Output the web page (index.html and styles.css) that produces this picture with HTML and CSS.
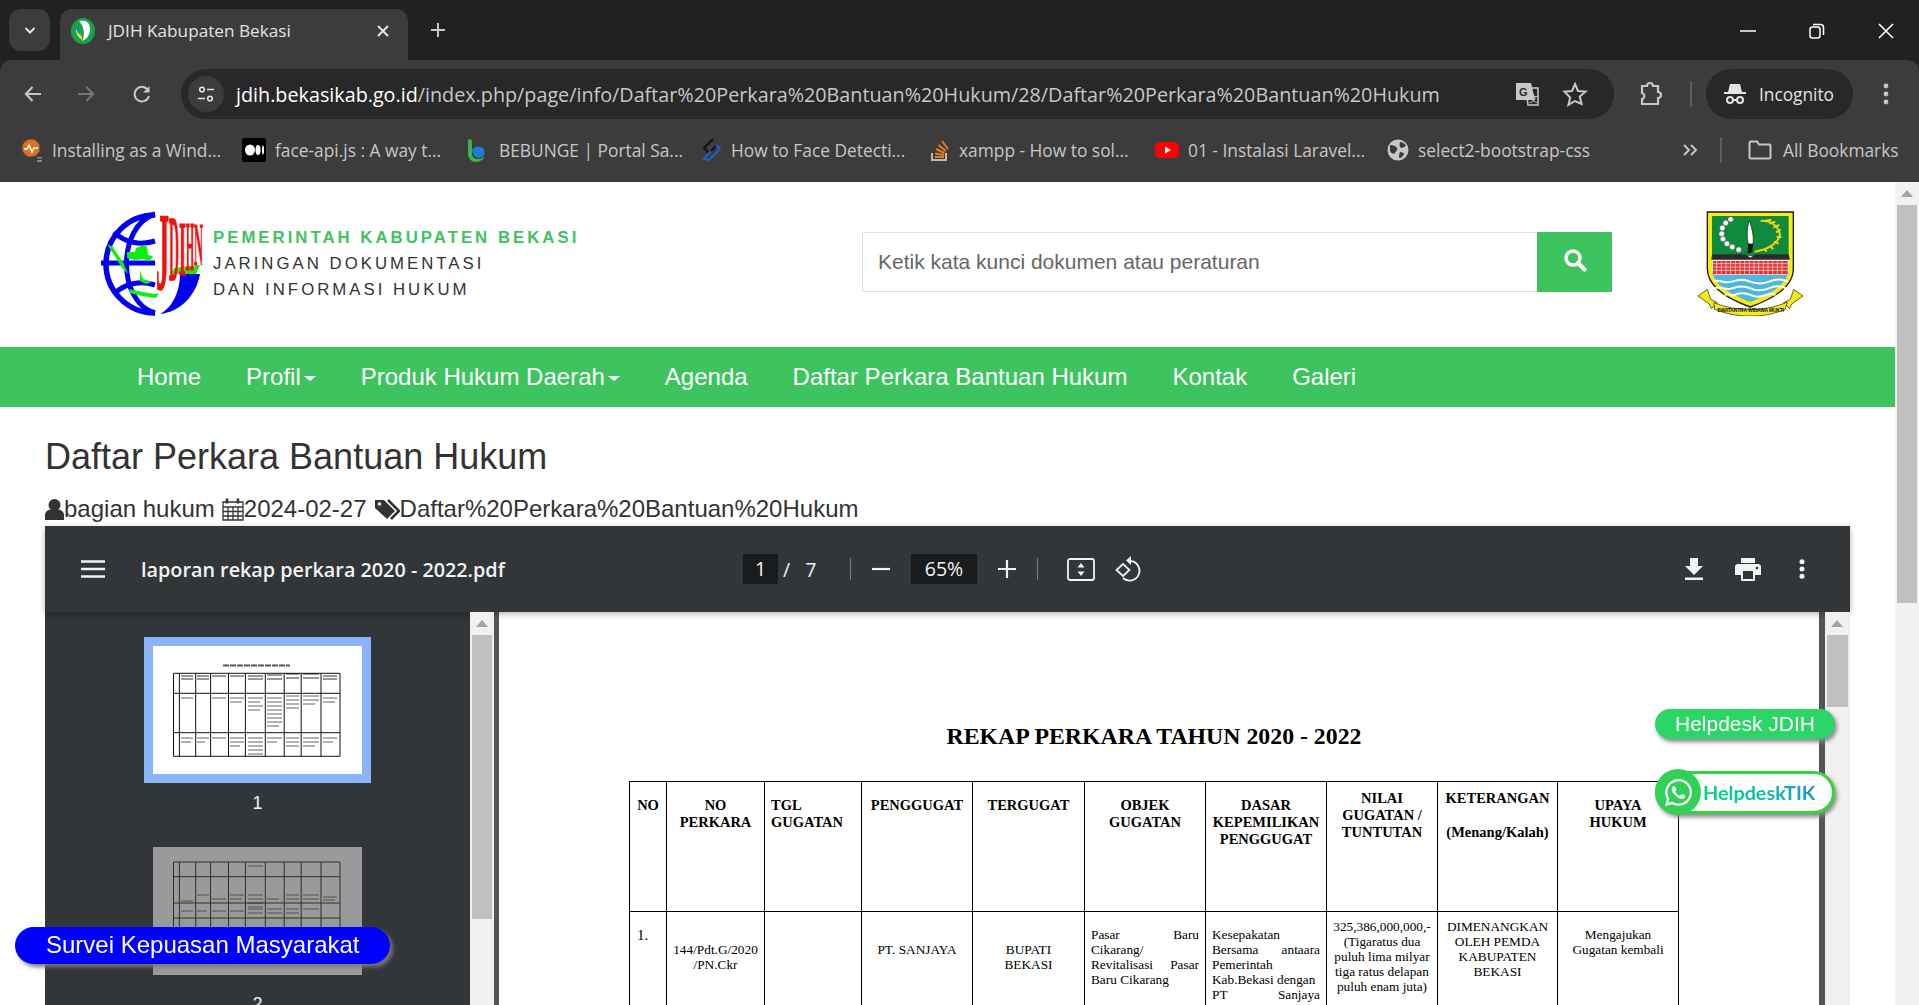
FILE: index.html
```html
<!DOCTYPE html>
<html lang="id">
<head>
<meta charset="UTF-8">
<title>JDIH Kabupaten Bekasi</title>
<link rel="stylesheet" href="styles.css">
</head>
<body>
  <!-- browser -->
  <div class="chrome">
    <div class="tabstrip">
      <div class="tab-list"><svg width="14" height="14" viewBox="0 0 14 14"><path d="M2.500 5l4.500 4.500L11.500 5" fill="none" stroke="#e3e3e3" stroke-width="2"/></svg></div>
      <div class="tab">
        <svg class="favicon" width="24" height="26" viewBox="0 0 24 26"><ellipse cx="12" cy="13" rx="12" ry="13" fill="#16a34a"/><path d="M8 3c7-1 11 1 11 8 0 6-3 10-8 12 3-5 3-14-3-20z" fill="#fff"/><path d="M5 10c4 2 6 6 6 12-3-2-7-7-6-12z" fill="#f4e61c"/><path d="M5 9c3 1 5 5 5 9-2-2-5-5-5-9z" fill="#1d7fd0"/></svg>
        <span class="tab-title">JDIH Kabupaten Bekasi</span>
        <svg class="tab-close" width="14" height="14" viewBox="0 0 14 14"><path d="M2 2l10 10M12 2L2 12" stroke="#e3e3e3" stroke-width="2"/></svg>
      </div>
      <svg class="new-tab" width="18" height="18" viewBox="0 0 18 18"><path d="M9 2v14M2 9h14" stroke="#c7c7c7" stroke-width="2"/></svg>
      <div class="win-controls">
        <svg width="16" height="16" viewBox="0 0 16 16"><path d="M0 8h16" stroke="#fff" stroke-width="1.500"/></svg>
        <svg width="16" height="16" viewBox="0 0 16 16"><rect x="1" y="4" width="10" height="11" rx="2.500" fill="none" stroke="#fff" stroke-width="1.500"/><path d="M4 1.500h7.500a3 3 0 013 3V12" fill="none" stroke="#fff" stroke-width="1.500"/></svg>
        <svg width="16" height="16" viewBox="0 0 16 16"><path d="M1 1l14 14M15 1L1 15" stroke="#fff" stroke-width="1.600"/></svg>
      </div>
    </div>
    <div class="toolbar">
      <svg class="nav-btn" width="20" height="20" viewBox="0 0 20 20"><path d="M18 10H3M9.500 3L2.800 10l6.700 7" fill="none" stroke="#c7c7c7" stroke-width="2"/></svg>
      <svg class="nav-btn" width="20" height="20" viewBox="0 0 20 20"><path d="M2 10h15M10.500 3l6.700 7-6.700 7" fill="none" stroke="#777" stroke-width="2"/></svg>
      <svg class="nav-btn" width="20" height="20" viewBox="0 0 20 20"><path d="M16.500 7A7.300 7.300 0 1017 12" fill="none" stroke="#c7c7c7" stroke-width="2"/><path d="M17.500 2v6.500H11z" fill="#c7c7c7"/></svg>
      <div class="omnibox">
        <span class="site-chip"><svg width="20" height="20" viewBox="0 0 20 20"><circle cx="6" cy="5.500" r="2.300" fill="none" stroke="#e3e3e3" stroke-width="1.600"/><path d="M11 5.500h7M2 14.500h7" stroke="#e3e3e3" stroke-width="1.600"/><circle cx="14" cy="14.500" r="2.300" fill="none" stroke="#e3e3e3" stroke-width="1.600"/></svg></span>
        <span class="url"><b>jdih.bekasikab.go.id</b>/index.php/page/info/Daftar%20Perkara%20Bantuan%20Hukum/28/Daftar%20Perkara%20Bantuan%20Hukum</span>
        <svg class="translate" width="26" height="26" viewBox="0 0 26 26"><path d="M12 7h12v17H14z" fill="#282828" stroke="#c7c7c7" stroke-width="1.500"/><path d="M2 2h15l4 17H2z" fill="#c7c7c7"/><text x="5" y="14.500" class="translate-g">G</text><text x="15" y="21" class="translate-x">文</text></svg>
        <svg class="star" width="26" height="26" viewBox="0 0 26 26"><path d="M13 3l3 7 7.500.6-5.700 4.900 1.800 7.400L13 20l-6.600 3.900 1.800-7.400L2.500 10.600 10 10z" fill="none" stroke="#c7c7c7" stroke-width="2"/></svg>
      </div>
      <svg class="puzzle" width="24" height="26" viewBox="0 0 24 26"><path d="M3 5h5c0-4 6-4 6 0h5v6c4 0 4 6 0 6v6H3v-5c3-1 3-5 0-6z" fill="none" stroke="#c7c7c7" stroke-width="2.200"/></svg>
      <span class="tool-sep"></span>
      <div class="incognito">
        <svg width="24" height="24" viewBox="0 0 24 24"><path d="M7 2h10l2 8H5z" fill="#e3e3e3"/><path d="M1 11h22" stroke="#e3e3e3" stroke-width="2"/><circle cx="7" cy="18" r="3" fill="none" stroke="#e3e3e3" stroke-width="2"/><circle cx="17" cy="18" r="3" fill="none" stroke="#e3e3e3" stroke-width="2"/><path d="M10 18h4" stroke="#e3e3e3" stroke-width="2"/></svg>
        <span>Incognito</span>
      </div>
      <svg class="kebab" width="6" height="24" viewBox="0 0 6 24"><circle cx="3" cy="4" r="2.400" fill="#c7c7c7"/><circle cx="3" cy="12" r="2.400" fill="#c7c7c7"/><circle cx="3" cy="20" r="2.400" fill="#c7c7c7"/></svg>
    </div>
    <div class="bookmarks">
      <div class="bookmark-list">
        <span class="bookmark"><svg width="22" height="24" viewBox="0 0 22 24"><circle cx="10" cy="10" r="9" fill="#e0701f"/><path d="M3 11h3l2-4 3 7 2-4h4" fill="none" stroke="#fff" stroke-width="1.500"/><circle cx="10" cy="10" r="9" fill="none" stroke="#555" stroke-width="1"/><path d="M16 19h5v1.500h-5zM16 22h5V24h-5z" fill="#888"/></svg>Installing as a Wind...</span>
        <span class="bookmark"><svg width="24" height="24" viewBox="0 0 24 24"><rect width="24" height="24" rx="2" fill="#000"/><ellipse cx="8" cy="12" rx="5" ry="5.500" fill="#fff"/><ellipse cx="16" cy="12" rx="2.500" ry="5" fill="#fff"/><ellipse cx="21" cy="12" rx="1" ry="4.500" fill="#fff"/></svg>face-api.js : A way t...</span>
        <span class="bookmark"><svg width="24" height="24" viewBox="0 0 24 24"><path d="M2 2c3-2 4 0 4 3v11c0 3 3 5 6 5s5-1 7-3c-2 4-5 6-9 6C5 24 2 20 2 16z" fill="#3cb44a"/><path d="M6 12c4-5 10-4 12 0s-1 8-5 8c-4 0-6-3-7-8z" fill="#1a7fd4"/></svg>BEBUNGE | Portal Sa...</span>
        <span class="bookmark"><svg width="22" height="24" viewBox="0 0 22 24"><path d="M13 1L4 10l5 5 7-7" fill="none" stroke="#111" stroke-width="2"/><path d="M16 7l4 4-11 11-5-1 7-8" fill="none" stroke="#1a5fd0" stroke-width="2"/></svg>How to Face Detecti...</span>
        <span class="bookmark"><svg width="20" height="24" viewBox="0 0 20 24"><path d="M2 15v7h14v-7" fill="none" stroke="#bbb" stroke-width="2"/><path d="M5 19h9M5 15.500l9 1.500M6 11l8.500 4M8.500 7l7.500 6M12 3l6 8" stroke="#e87a22" stroke-width="2"/></svg>xampp - How to sol...</span>
        <span class="bookmark"><svg width="24" height="24" viewBox="0 0 24 24"><rect y="4" width="24" height="16" rx="5" fill="#f00"/><path d="M10 8.500v7l6-3.500z" fill="#fff"/></svg>01 - Instalasi Laravel...</span>
        <span class="bookmark"><svg width="22" height="22" viewBox="0 0 22 22"><circle cx="11" cy="11" r="10.500" fill="#c7c7c7"/><path d="M3 6c3 0 6 1 7 3s-1 3-2 5-4 0-5-2zM13 3c3 0 5 2 6 4l-4 2c-2 0-3-3-2-6zM13 13l4 1c0 3-3 5-5 5 0-2 0-4 1-6z" fill="#3c3c3c"/></svg>select2-bootstrap-css</span>
      </div>
      <svg class="more" width="16" height="16" viewBox="0 0 16 16"><path d="M2 3l5 5-5 5M9 3l5 5-5 5" fill="none" stroke="#c7c7c7" stroke-width="2"/></svg>
      <span class="tool-sep"></span>
      <span class="all-bookmarks"><svg width="24" height="20" viewBox="0 0 24 20"><path d="M1.500 3a1.500 1.500 0 011.500-1.500h6L11 4.500h10A1.500 1.500 0 0122.500 6v11a1.500 1.500 0 01-1.500 1.500H3A1.500 1.500 0 011.500 17z" fill="none" stroke="#c7c7c7" stroke-width="2"/></svg>All Bookmarks</span>
    </div>
  </div>

  <!-- halaman -->
  <div class="site">
    <div class="site-main">
      <header class="site-header">
        <div class="brand">
          <svg class="brand-logo" width="106" height="106" viewBox="0 0 106 106">
            <path d="M57 5a49 49 0 100 98" fill="none" stroke="#0000f0" stroke-width="5.500"/>
            <path d="M57 4C19 16 19 92 57 103" fill="none" stroke="#0000f0" stroke-width="5"/>
            <path d="M16 22c12 12 28 13 41 9M3 53h54M16 84c12-12 28-13 41-9" fill="none" stroke="#0000f0" stroke-width="5"/>
            <path d="M9 34l6 3 5 8 5 7 5 12-6-6-6-10zM29 42l8 0 1-4 8-3 3 2 1 8 5 1-3 5-7-2-8 1-8-2zM42 60l3 9 9 3-6 2-6-3zM31 79l14 3 12 2 4-1-3 5-14-2-12-3z" fill="#10ee10"/>
            <path d="M76 58l26-3-4 9H74z" fill="#10ee10"/>
            <path d="M102 64C98 86 82 102 62 104c12-6 20-22 20-40z" fill="#0000f0"/>
            <g class="logo-letters">
              <text transform="translate(58 79) scale(1.180 5)">J</text>
              <text transform="translate(71 70) scale(.63 4.200)">D</text>
              <text transform="translate(81 65) scale(.81 3.600)">I</text>
              <text transform="translate(88 60) scale(.47 3.150)">H</text>
              <text transform="translate(96 55) scale(.57 2.740)">N</text>
            </g>
          </svg>
          <div class="brand-text">
            <div class="brand-gov">PEMERINTAH KABUPATEN BEKASI</div>
            <div>JARINGAN DOKUMENTASI</div>
            <div>DAN INFORMASI HUKUM</div>
          </div>
        </div>
        <form class="search">
          <input type="text" placeholder="Ketik kata kunci dokumen atau peraturan">
          <button type="button"><svg width="24" height="24" viewBox="0 0 24 24"><circle cx="10" cy="10" r="7" fill="none" stroke="#fff" stroke-width="3.400"/><path d="M15 15l6.500 6.500" stroke="#fff" stroke-width="4" stroke-linecap="round"/></svg></button>
        </form>
        <svg class="emblem" width="105" height="105" viewBox="0 0 315 315">
          <path d="M28 3h258v170c0 55-60 90-129 115C88 263 28 228 28 173z" fill="#f6ec13" stroke="#1a1a1a" stroke-width="4"/>
          <path d="M42 15h230v120H42z" fill="#0f8a3c"/>
          <path d="M42 135h230v58H42z" fill="#f5f0ef"/>
          <path d="M45 150h224v40H45z" fill="#e03030"/>
          <path class="emblem-grid" d="M45 158h224M45 168h224M45 178h224M56 150v40M70 150v40M84 150v40M98 150v40M112 150v40M126 150v40M140 150v40M154 150v40M168 150v40M182 150v40M196 150v40M210 150v40M224 150v40M238 150v40M252 150v40"/>
          <path d="M42 130h100l15 10 15-10h100l4 16H40z" fill="#2b2b2b"/>
          <path d="M42 192h230v-19c0 45-50 74-115 100C92 247 42 218 42 173z" fill="#4fb6e0"/>
          <path class="emblem-wave" d="M45 212c20-10 30 8 56 0s36-8 56 0 36 8 56 0 36-10 58 0M50 232c20-10 30 8 52 0s36-8 55 0 36 8 55 0 36-8 52 0M80 252c16-8 16 6 28 0s34-8 50 0 30 6 46 0 20-4 28 0"/>
          <g fill="#fff" stroke="#333" stroke-width="1">
            <circle cx="98" cy="25" r="8"/><circle cx="83" cy="36" r="8"/><circle cx="73" cy="51" r="8"/><circle cx="71" cy="68" r="8"/><circle cx="75" cy="84" r="8"/><circle cx="87" cy="98" r="8"/><circle cx="103" cy="108" r="8"/><circle cx="122" cy="116" r="8"/>
          </g>
          <path d="M154 28c-8 25-8 50-3 72h14c3-24-3-50-11-72z" fill="#fff" stroke="#111" stroke-width="2"/>
          <path d="M150 98h15l-2 24-5 5h-10l2-14z" fill="#111"/>
          <path class="emblem-leaf" d="M188 30c26-4 52 12 58 40-4 24-30 44-76 52M200 30l20-4M214 38l18-6M226 50l18-8M234 64l14-8M236 78l14 0M228 92l14 6M214 104l12 10M198 112l8 10"/>
          <path d="M0 255l28-20 10 30 20 10-18 18-6-14z M315 255l-28-20-10 30-20 10 18 18 6-14z" fill="#f6ec13" stroke="#1a1a1a" stroke-width="2"/>
          <path d="M48 275c40 16 70 20 108 20 44 0 75-6 112-22l-6 22c-40 16-68 20-106 20-40 0-68-6-106-20z" fill="#f6ec13" stroke="#1a1a1a" stroke-width="2"/>
          <text x="58" y="303" class="emblem-motto" textLength="200">SWATANTRA WIBAWA MUKTI</text>
        </svg>
      </header>
      <nav class="menu">
        <a>Home</a>
        <a>Profil<i class="caret"></i></a>
        <a>Produk Hukum Daerah<i class="caret"></i></a>
        <a>Agenda</a>
        <a>Daftar Perkara Bantuan Hukum</a>
        <a>Kontak</a>
        <a>Galeri</a>
      </nav>
      <main class="content">
        <h1>Daftar Perkara Bantuan Hukum</h1>
        <div class="meta">
          <svg width="19" height="22" viewBox="0 0 19 22"><circle cx="9.500" cy="7" r="6" fill="#333"/><path d="M0 22v-5c0-4 4-6 9.500-6S19 13 19 17v5z" fill="#333"/></svg><span>bagian hukum</span>
          <svg width="22" height="24" viewBox="0 0 22 24"><path d="M1 5h20v18H1zM1 10h20M6 10v13M11 10v13M16 10v13M1 14.500h20M1 19h20" fill="none" stroke="#333" stroke-width="1.300"/><path d="M5 1.500v5M16 1.500v5" stroke="#333" stroke-width="2.500"/></svg><span>2024-02-27</span>
          <svg width="26" height="22" viewBox="0 0 26 22"><path d="M1 2h9l11 11-8 8L1 10z" fill="#333"/><circle cx="5.500" cy="6" r="1.800" fill="#fff"/><path d="M14 2l11 11-8 8" fill="none" stroke="#333" stroke-width="2.600"/></svg><span>Daftar%20Perkara%20Bantuan%20Hukum</span>
        </div>

        <div class="viewer">
          <div class="viewer-bar">
            <div class="viewer-title">
              <svg width="24" height="18" viewBox="0 0 24 18"><path d="M0 1.500h24M0 9h24M0 16.500h24" stroke="#f1f3f4" stroke-width="2.600"/></svg>
              <span>laporan rekap perkara 2020 - 2022.pdf</span>
            </div>
            <div class="viewer-controls">
              <span class="page-box">1</span>
              <span class="page-count">/ 7</span>
              <span class="bar-sep"></span>
              <svg width="18" height="18" viewBox="0 0 18 18"><path d="M0 9h18" stroke="#f1f3f4" stroke-width="2.200"/></svg>
              <span class="zoom-box">65%</span>
              <svg width="18" height="18" viewBox="0 0 18 18"><path d="M0 9h18M9 0v18" stroke="#f1f3f4" stroke-width="2.200"/></svg>
              <span class="bar-sep"></span>
              <svg class="fit" width="28" height="23" viewBox="0 0 28 23"><rect x="1" y="1" width="26" height="21" rx="2" fill="none" stroke="#f1f3f4" stroke-width="1.800"/><path d="M14 5l3.500 4.500h-7zM14 18l3.500-4.500h-7z" fill="#f1f3f4"/></svg>
              <svg width="27" height="26" viewBox="0 0 27 26"><path d="M13 5h2a9.800 9.800 0 11-7 17" fill="none" stroke="#f1f3f4" stroke-width="1.800"/><path d="M16 0v9l-5-4.500z" fill="#f1f3f4"/><path d="M8 8l6.500 6L8 20l-6.500-6z" fill="none" stroke="#f1f3f4" stroke-width="1.800"/></svg>
            </div>
            <div class="viewer-actions">
              <svg width="18" height="22" viewBox="0 0 18 22"><path d="M5 0h8v8h5l-9 9-9-9h5zM0 19.500h18V22H0z" fill="#f1f3f4"/></svg>
              <svg width="26" height="23" viewBox="0 0 26 23"><path d="M6 0h14v5H6zM3 6h20a3 3 0 013 3v8h-6v6H6v-6H0V9a3 3 0 013-3z" fill="#f1f3f4"/><path d="M8 13h10v8H8z" fill="#323639"/><circle cx="22" cy="10" r="1.300" fill="#323639"/></svg>
              <svg class="viewer-more" width="6" height="20" viewBox="0 0 6 20"><circle cx="3" cy="2.700" r="2.500" fill="#f1f3f4"/><circle cx="3" cy="10" r="2.500" fill="#f1f3f4"/><circle cx="3" cy="17.300" r="2.500" fill="#f1f3f4"/></svg>
            </div>
          </div>
          <div class="viewer-body">
            <aside class="thumbs">
              <div class="thumb-list">
                <div class="thumb thumb-active">
                  <svg width="209" height="128" viewBox="0 0 209 128">
                    <path d="M70 19.500h67" stroke="#555" stroke-width="2.200" stroke-dasharray="6 1"/>
                    <path d="M28 30h12M44 30h12M59 30h14M77 30h14M95 30h15M114 29h15M114 33h15M133 28h13M150 28h16M170 30h14M28 33h12M44 33h12M95 33h15M133 32h13M150 32h16M170 33h14" stroke="#777" stroke-width="1.500"/>
                    <path d="M28 52h12M59 52h14M77 52h14M77 56h12M95 52h15M95 56h12M95 60h15M95 64h12M114 52h15M114 56h15M114 60h15M114 64h15M114 68h15M114 72h15M114 76h15M114 80h12M133 50h13M133 54h13M133 58h13M133 62h13M150 50h16M150 54h16M150 58h12M170 52h14M170 56h12" stroke="#999" stroke-width="1.500"/>
                    <path d="M28 92h12M28 96h10M44 92h12M44 96h8M59 92h14M77 92h14M77 96h14M77 100h10M95 92h15M95 96h15M95 100h15M95 104h15M95 108h15M114 92h15M114 96h10M133 92h13M133 96h13M133 100h13M150 92h16M150 96h16M150 100h12M170 92h14M170 96h10" stroke="#999" stroke-width="1.500"/>
                    <path d="M20.500 27.300h166.500v83H20.500zM26.400 27.300v83M42.700 27.300v83M57.600 27.300v83M75.500 27.300v83M92.400 27.300v83M112.300 27.300v83M131.200 27.300v83M148.200 27.300v83M168 27.300v83M20.500 47.300H187M20.500 86.700H187" fill="none" stroke="#111" stroke-width="1"/>
                  </svg>
                </div>
                <div class="thumb-num">1</div>
                <div class="thumb thumb-idle">
                  <svg width="209" height="128" viewBox="0 0 209 128">
                    <path d="M95 19h15M28 54h12M44 48h12M59 52h14M77 48h14M77 52h12M95 48h15M95 52h15M95 56h15M95 60h15M114 52h12M133 48h13M133 52h13M150 48h16M150 52h16M170 50h14M170 53h12M28 64h12M44 64h10M59 64h14M77 64h14M95 62h15M95 66h15M114 62h15M114 66h15M133 62h13M133 66h13M150 62h16" stroke="#6b6b6d" stroke-width="1.500"/>
                    <path d="M20.500 15H187v72H20.500zM26.400 15v72M42.700 15v72M57.600 15v72M75.500 15v72M92.400 15v72M112.300 15v72M131.200 15v72M148.200 15v72M168 15v72M20.500 29.700H187M20.500 56H187M20.500 71H187" fill="none" stroke="#2e2e30" stroke-width="1"/>
                  </svg>
                </div>
                <div class="thumb-num">2</div>
              </div>
              <div class="scrollbar thumbs-scroll"><span class="arrow-up"></span><span class="scroll-thumb"></span></div>
            </aside>
            <section class="pages">
              <article class="pdf-page">
                <h2>REKAP PERKARA TAHUN 2020 - 2022</h2>
                <table class="rekap">
                  <colgroup>
                    <col class="c-no"><col class="c-perkara"><col class="c-tgl"><col class="c-penggugat"><col class="c-tergugat"><col class="c-objek"><col class="c-dasar"><col class="c-nilai"><col class="c-ket"><col class="c-upaya">
                  </colgroup>
                  <tr class="head">
                    <th>NO</th>
                    <th>NO<br>PERKARA</th>
                    <th class="left">TGL<br>GUGATAN</th>
                    <th>PENGGUGAT</th>
                    <th>TERGUGAT</th>
                    <th>OBJEK<br>GUGATAN</th>
                    <th>DASAR<br>KEPEMILIKAN<br>PENGGUGAT</th>
                    <th class="high">NILAI<br>GUGATAN /<br>TUNTUTAN</th>
                    <th class="high">KETERANGAN<br>&nbsp;<br>(Menang/Kalah)</th>
                    <th>UPAYA<br>HUKUM</th>
                  </tr>
                  <tr class="row">
                    <td class="num">1.</td>
                    <td class="mid">144/Pdt.G/2020<br>/PN.Ckr</td>
                    <td></td>
                    <td class="mid">PT. SANJAYA</td>
                    <td class="mid">BUPATI<br>BEKASI</td>
                    <td class="just">Pasar Baru Cikarang/ Revitalisasi Pasar Baru Cikarang</td>
                    <td class="just">Kesepakatan Bersama antaara Pemerintah Kab.Bekasi dengan <span class="just-line">PT Sanjaya</span></td>
                    <td class="center">325,386,000,000,-<br>(Tigaratus dua<br>puluh lima milyar<br>tiga ratus delapan<br>puluh enam juta)</td>
                    <td class="center">DIMENANGKAN<br>OLEH PEMDA<br>KABUPATEN<br>BEKASI</td>
                    <td class="center upaya">Mengajukan<br>Gugatan kembali</td>
                  </tr>
                </table>
              </article>
              <div class="scrollbar pages-scroll"><span class="arrow-up"></span><span class="scroll-thumb"></span></div>
            </section>
          </div>
        </div>
      </main>
    </div>
    <div class="scrollbar site-scroll"><span class="arrow-up"></span><span class="scroll-thumb"></span></div>
  </div>

  <a class="float-survey">Survei Kepuasan Masyarakat</a>
  <a class="float-helpdesk">Helpdesk JDIH</a>
  <a class="float-tik">
    <span class="tik-icon"><svg width="27" height="27" viewBox="0 0 24 24"><path fill="#fff" d="M17.472 14.382c-.297-.149-1.758-.867-2.03-.967-.273-.099-.471-.148-.67.15-.197.297-.767.966-.94 1.164-.173.199-.347.223-.644.075-.297-.15-1.255-.463-2.39-1.475-.883-.788-1.48-1.761-1.653-2.059-.173-.297-.018-.458.13-.606.134-.133.298-.347.446-.52.149-.174.198-.298.298-.497.099-.198.05-.371-.025-.52-.075-.149-.669-1.612-.916-2.207-.242-.579-.487-.5-.669-.51-.173-.008-.371-.01-.57-.01-.198 0-.52.074-.792.372-.272.297-1.04 1.016-1.04 2.479 0 1.462 1.065 2.875 1.213 3.074.149.198 2.096 3.2 5.077 4.487.709.306 1.262.489 1.694.625.712.227 1.36.195 1.871.118.571-.085 1.758-.719 2.006-1.413.248-.694.248-1.289.173-1.413-.074-.124-.272-.198-.57-.347m-5.421 7.403h-.004a9.87 9.87 0 01-5.031-1.378l-.361-.214-3.741.982.998-3.648-.235-.374a9.86 9.86 0 01-1.51-5.26c.001-5.45 4.436-9.884 9.888-9.884 2.64 0 5.122 1.03 6.988 2.898a9.825 9.825 0 012.893 6.994c-.003 5.45-4.437 9.884-9.885 9.884m8.413-18.297A11.815 11.815 0 0012.05 0C5.495 0 .16 5.335.157 11.892c0 2.096.547 4.142 1.588 5.945L.057 24l6.305-1.654a11.882 11.882 0 005.683 1.448h.005c6.554 0 11.89-5.335 11.893-11.893a11.821 11.821 0 00-3.48-8.413z"/></svg></span>
    <span class="tik-text">HelpdeskTIK</span>
  </a>
</body>
</html>
```
FILE: styles.css
```css
* {
  box-sizing: border-box;
}
html, body {
  height: 100%;
  margin: 0;
  overflow: hidden;
}
body {
  display: flex;
  flex-direction: column;
  font-family: "Liberation Sans", Arial, sans-serif;
  color: #333;
  background: #fff;
}

/* browser */
.chrome {
  flex: none;
  height: 182px;
  background: #202221;
  font-family: "Open Sans", "Noto Sans", sans-serif;
}
.tabstrip {
  position: relative;
  display: flex;
  align-items: flex-end;
  height: 60px;
  padding-left: 9px;
}
.tab-list {
  display: flex;
  align-items: center;
  justify-content: center;
  width: 41px;
  height: 42px;
  margin-bottom: 9px;
  border-radius: 12px;
  background: #3c3c3c;
}
.tab {
  display: flex;
  align-items: center;
  width: 348px;
  height: 51px;
  margin-left: 10px;
  padding: 0 18px 8px 11px;
  border-radius: 12px 12px 0 0;
  background: #3c3c3c;
  color: #e3e3e3;
  font-size: 17.200px;
}
.favicon {
  margin-right: 13px;
}
.tab-title {
  flex: 1;
}
.new-tab {
  margin: 0 0 21px 21px;
}
.win-controls {
  display: flex;
  gap: 53px;
  margin: 0 25px 21px auto;
}
.toolbar {
  display: flex;
  align-items: center;
  height: 70px;
  padding: 0 0 2px 23px;
  border-radius: 12px 12px 0 0;
  background: #3c3c3c;
}
.nav-btn {
  margin-right: 33px;
}
.nav-btn:nth-child(2) {
  margin-right: 36px;
}
.nav-btn:nth-child(3) {
  margin-right: 29px;
}
.omnibox {
  display: flex;
  align-items: center;
  width: 1433px;
  height: 50px;
  padding: 0 26px 0 7px;
  border-radius: 25px;
  background: #282828;
}
.site-chip {
  display: flex;
  align-items: center;
  justify-content: center;
  width: 36px;
  height: 36px;
  margin-right: 12px;
  border-radius: 50%;
  background: #3c3c3c;
}
.url {
  flex: 1;
  color: #c7c7c7;
  font-size: 19.750px;
  white-space: nowrap;
}
.url b {
  color: #fff;
  font-weight: 400;
}
.translate {
  margin-right: 22px;
}
.translate-g {
  fill: #282828;
  font: 700 11px "Liberation Sans", sans-serif;
}
.translate-x {
  fill: #c7c7c7;
  font: 9px "Noto Sans CJK SC", sans-serif;
}
.puzzle {
  margin-left: 25px;
}
.tool-sep {
  width: 2px;
  height: 26px;
  margin: 0 14px 0 27px;
  background: #5e5e5e;
}
.incognito {
  display: flex;
  align-items: center;
  gap: 12px;
  width: 147px;
  height: 50px;
  padding-left: 17px;
  border-radius: 25px;
  background: #282828;
  color: #e3e3e3;
  font-size: 17.300px;
}
.kebab {
  margin-left: 30px;
}
.bookmarks {
  display: flex;
  align-items: center;
  height: 52px;
  padding: 0 0 13px 21px;
  background: #3c3c3c;
  color: #c7c7c7;
  font-size: 17.350px;
  white-space: nowrap;
}
.bookmark-list {
  display: grid;
  grid-template-columns: 221px 224px 234px 230px 225px 232px 290px;
  width: 1661px;
}
.bookmark {
  display: flex;
  align-items: center;
  gap: 9px;
}
.bookmarks .tool-sep {
  margin: 0 26px 0 22px;
}
.all-bookmarks {
  display: flex;
  align-items: center;
  gap: 11px;
}

/* halaman */
.site {
  flex: 1;
  display: flex;
  min-height: 0;
}
.site-main {
  flex: 1;
  min-width: 0;
}
.scrollbar {
  flex: none;
  position: relative;
  width: 24px;
  background: #f1f1f1;
}
.scroll-thumb {
  position: absolute;
  left: 2px;
  right: 2px;
  background: #c0c0c0;
}
.arrow-up {
  position: absolute;
  left: 6px;
  top: 8px;
  border: 6px solid transparent;
  border-top: 0;
  border-bottom: 7px solid #a3a3a3;
}
.site-scroll .scroll-thumb {
  top: 23px;
  height: 398px;
}

.site-header {
  display: flex;
  align-items: center;
  height: 165px;
}
.brand {
  display: flex;
  align-items: center;
  width: 862px;
  margin-bottom: 4px;
  padding: 0 0 0 98px;
}
.brand-logo {
  flex: none;
  margin-right: 9px;
  overflow: visible;
}
.logo-letters {
  fill: #f01010;
  stroke: #f01010;
  stroke-width: .3;
  font: 700 22px "Liberation Serif", serif;
}
.brand-text {
  margin-top: 2px;
  font-size: 16.800px;
  line-height: 26px;
  letter-spacing: 3px;
}
.brand-gov {
  color: #3dc45f;
  font-weight: 700;
}
.search {
  display: flex;
  width: 750px;
  height: 60px;
  margin: 0 0 6px;
}
.search input {
  flex: 1;
  min-width: 0;
  padding: 0 15px;
  border: 1px solid #ddd;
  border-right: 0;
  outline: 0;
  font: 21px "Liberation Sans", sans-serif;
}
.search input::placeholder {
  color: #666;
}
.search button {
  width: 75px;
  border: 0;
  background: #3dc45f;
}
.emblem {
  margin: 0 0 3px 86px;
}
.emblem-grid {
  fill: none;
  stroke: #f5f0ef;
  stroke-width: 2;
}
.emblem-wave {
  fill: none;
  stroke: #fff;
  stroke-width: 6;
}
.emblem-leaf {
  fill: none;
  stroke: #f6d50f;
  stroke-width: 6;
}
.emblem-motto {
  fill: #111;
  font: 700 15px "Liberation Sans", sans-serif;
}

.menu {
  display: flex;
  align-items: center;
  gap: 45px;
  height: 60px;
  padding-left: 137px;
  background: #3dc45f;
  color: #fff;
  font-size: 24px;
}
.caret {
  display: inline-block;
  margin-left: 3px;
  vertical-align: middle;
  border: 6px solid transparent;
  border-top: 5px solid #fff;
  border-bottom: 0;
}

.content {
  padding: 0 45px;
}
.content h1 {
  margin: 30px 0 0;
  font-size: 36px;
  font-weight: 400;
  line-height: 40px;
}
.meta {
  display: flex;
  align-items: center;
  height: 32px;
  margin: 16px 0 1px;
  font-size: 24px;
}
.meta span {
  margin-right: 7px;
}

/* pdf */
.viewer {
  height: 700px;
  background: #525659;
}
.viewer-bar {
  position: relative;
  display: grid;
  grid-template-columns: 698px 1fr auto;
  align-items: center;
  height: 86px;
  background: #323639;
  box-shadow: 0 2px 6px rgba(0, 0, 0, .3);
  color: #f1f3f4;
  font-family: "Open Sans", "Noto Sans", sans-serif;
}
.viewer-title {
  display: flex;
  align-items: center;
  gap: 36px;
  padding-left: 36px;
  font-size: 19.800px;
  font-weight: 600;
}
.viewer-controls {
  display: flex;
  align-items: center;
  font-size: 19.500px;
}
.page-box {
  width: 35px;
  height: 30px;
  background: #191b1c;
  line-height: 30px;
  text-align: center;
}
.page-count {
  width: 72px;
  padding-left: 5px;
  word-spacing: 10px;
}
.bar-sep {
  width: 1px;
  height: 22px;
  background: #7a7d80;
}
.viewer-controls .bar-sep + svg {
  margin-left: 21px;
}
.zoom-box {
  width: 66px;
  height: 30px;
  margin: 0 21px;
  background: #191b1c;
  line-height: 30px;
  text-align: center;
}
.zoom-box + svg {
  margin-right: 21px;
}
.viewer-controls .bar-sep + .fit {
  margin: 0 20px 0 29px;
}
.viewer-actions {
  display: flex;
  align-items: center;
  gap: 32px;
  padding-right: 45px;
}
.viewer-more {
  margin-left: 6px;
}
.viewer-body {
  display: flex;
  height: 614px;
}
.thumbs {
  display: flex;
  flex: none;
  width: 449px;
  background: #323639;
}
.thumb-list {
  flex: 1;
  padding-top: 25px;
}
.thumb {
  width: 209px;
  height: 128px;
  margin: 9px auto 0 108px;
}
.thumb svg {
  display: block;
}
.thumb-active {
  background: #fff;
  box-shadow: 0 0 0 9px #8ab4f8;
}
.thumb-idle {
  margin-top: 34px;
  background: #9a9a9c;
}
.thumb-num {
  width: 209px;
  margin: 19px 0 0 108px;
  color: #f1f3f4;
  font-size: 18px;
  line-height: 20px;
  text-align: center;
}
.thumbs-scroll .scroll-thumb {
  top: 23px;
  height: 284px;
}
.pages {
  flex: 1;
  display: flex;
  padding-left: 5px;
}
.pdf-page {
  flex: 1;
  padding: 111px 0 0 130px;
  background: #fff;
  color: #000;
  font-family: "Liberation Serif", "Times New Roman", serif;
}
.pdf-page h2 {
  width: 1050px;
  margin: 0;
  font-size: 23.800px;
  line-height: 26px;
  text-align: center;
}
.rekap {
  width: 1049px;
  margin-top: 32px;
  border-collapse: collapse;
  table-layout: fixed;
}
.rekap th, .rekap td {
  padding: 0;
  border: 1.500px solid #000;
}
.c-no { width: 37px; }
.c-perkara { width: 98px; }
.c-tgl { width: 97px; }
.c-penggugat { width: 111px; }
.c-tergugat { width: 112px; }
.c-objek { width: 121px; }
.c-dasar { width: 121px; }
.c-nilai { width: 111px; }
.c-ket { width: 120px; }
.c-upaya { width: 121px; }
.head th {
  height: 130px;
  padding-top: 15px;
  font-size: 14.500px;
  line-height: 17px;
  vertical-align: top;
}
.head th.left {
  padding-left: 6px;
  text-align: left;
}
.head th.high {
  padding-top: 8px;
}
.row td {
  height: 180px;
  padding-top: 7px;
  font-size: 13.300px;
  line-height: 15px;
  vertical-align: top;
}
.row td.num {
  padding: 16px 0 0 7px;
  font-size: 15px;
}
.row td.mid {
  padding-top: 30px;
  text-align: center;
}
.row td.center {
  text-align: center;
}
.row td.upaya {
  padding-top: 15px;
}
.row td.just {
  padding: 15px 6px 0 6px;
  text-align: justify;
}
.just-line {
  display: block;
  text-align-last: justify;
}
.pages-scroll {
  width: 25px;
  margin-left: 6px;
}
.pages-scroll .scroll-thumb {
  top: 23px;
  height: 72px;
}

/* tombol melayang */
.float-survey {
  position: fixed;
  left: 15px;
  top: 927px;
  width: 375px;
  height: 37px;
  padding-left: 31px;
  border-radius: 19px;
  background: #0000ff;
  box-shadow: 3px 3px 4px #777;
  color: #fff;
  font-size: 24px;
  line-height: 36px;
}
.float-helpdesk {
  position: fixed;
  left: 1655px;
  top: 709px;
  width: 180px;
  height: 30px;
  border-radius: 15px;
  background: #2bd667;
  box-shadow: 2px 3px 4px #888;
  color: #fff;
  font-size: 21px;
  line-height: 30px;
  text-align: center;
}
.float-tik {
  position: fixed;
  left: 1655px;
  top: 771px;
  display: flex;
  align-items: center;
  width: 180px;
  height: 43px;
  border: 3px solid #3bd23f;
  border-radius: 22px;
  background: #fff;
  box-shadow: 2px 3px 4px #888;
}
.tik-icon {
  position: absolute;
  left: -3px;
  top: -5px;
  display: flex;
  align-items: center;
  justify-content: center;
  width: 46px;
  height: 46px;
  border-radius: 50%;
  background: #31d158;
}
.tik-text {
  margin: 0 0 2px 45px;
  background: linear-gradient(90deg, #00d97a, #1a9cc4);
  -webkit-background-clip: text;
  background-clip: text;
  color: transparent;
  font: 700 19.800px Lato, sans-serif;
}
```
